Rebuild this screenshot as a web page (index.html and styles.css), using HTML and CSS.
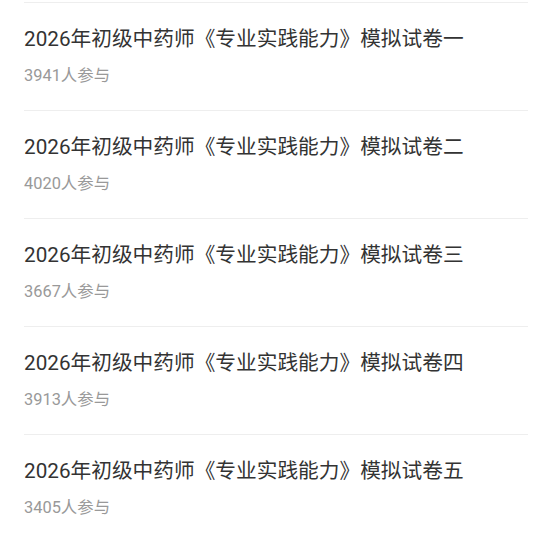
FILE: index.html
```html
<!DOCTYPE html>
<html lang="zh-CN">
<head>
    <meta charset="UTF-8">
    <meta name="viewport" content="width=device-width, initial-scale=1.0">
    <title>模拟试卷</title>
    <link rel="stylesheet" href="styles.css">
</head>
<body>
    <div class="paper-list">
        <div class="paper-item">
            <div class="paper-title">2026年初级中药师《专业实践能力》模拟试卷一</div>
            <div class="paper-count">3941人参与</div>
        </div>
        <div class="paper-item">
            <div class="paper-title">2026年初级中药师《专业实践能力》模拟试卷二</div>
            <div class="paper-count">4020人参与</div>
        </div>
        <div class="paper-item">
            <div class="paper-title">2026年初级中药师《专业实践能力》模拟试卷三</div>
            <div class="paper-count">3667人参与</div>
        </div>
        <div class="paper-item">
            <div class="paper-title">2026年初级中药师《专业实践能力》模拟试卷四</div>
            <div class="paper-count">3913人参与</div>
        </div>
        <div class="paper-item">
            <div class="paper-title">2026年初级中药师《专业实践能力》模拟试卷五</div>
            <div class="paper-count">3405人参与</div>
        </div>
    </div>
</body>
</html>
```

FILE: styles.css
```css
body {
    margin: 0;
    padding: 0;
    background-color: #fff;
    font-family: Roboto, "Noto Sans CJK SC", sans-serif;
}
.paper-list {
    padding: 2px 25px 0 24px;
}
.paper-item {
    border-top: 1px solid #eeeeee;
    padding: 21px 0 23px;
}
.paper-title {
    font-size: 20.7px;
    line-height: 30px;
    color: #333;
    white-space: nowrap;
}
.paper-count {
    margin-top: 11px;
    font-size: 16.4px;
    line-height: 22px;
    color: #999;
}
```
